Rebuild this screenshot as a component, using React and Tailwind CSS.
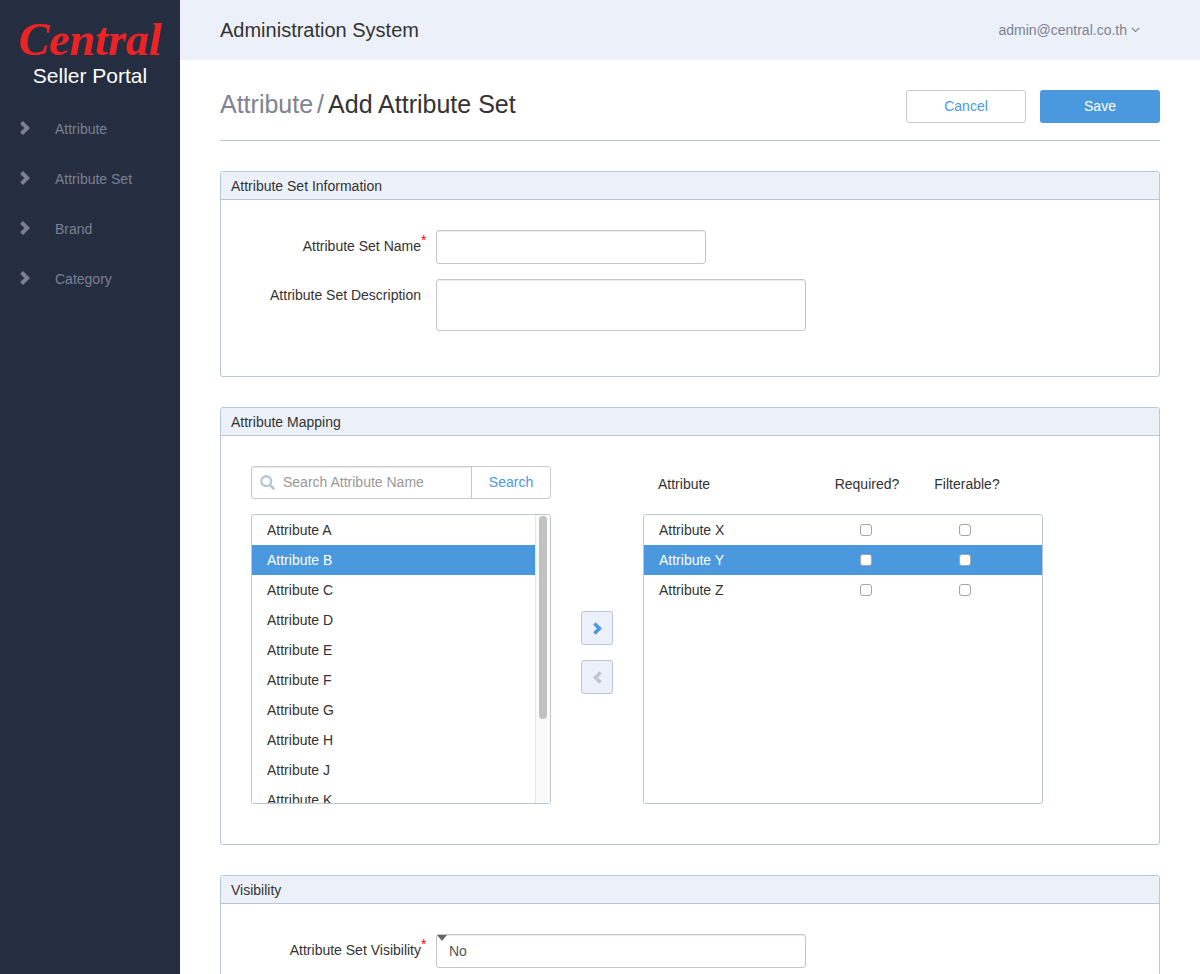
import { useState } from "react";

const NAV_ITEMS = ["Attribute", "Attribute Set", "Brand", "Category"];
const AVAILABLE = ["A", "B", "C", "D", "E", "F", "G", "H", "J", "K"];
const MAPPED = ["X", "Y", "Z"];
const VISIBLE_HEIGHT = 288;
const THUMB_HEIGHT = 203;

const FIELD =
  "block rounded-[3px] border border-[#c3c6c9] bg-white px-3 text-sm text-[#555] shadow-[inset_0_1px_1px_rgba(0,0,0,0.08)] outline-none focus:border-[#4a99df]";

function Chevron({ className }) {
  return (
    <svg viewBox="0 0 10 14" fill="currentColor" className={className} aria-hidden="true">
      <path d="M0.7 2.3 2.4 0.6a0.8 0.8 0 0 1 1.1 0L9.5 6.5a0.7 0.7 0 0 1 0 1L3.5 13.4a0.8 0.8 0 0 1-1.1 0L0.7 11.7a0.8 0.8 0 0 1 0-1.1L4.4 7 0.7 3.4a0.8 0.8 0 0 1 0-1.1Z" />
    </svg>
  );
}

function SearchIcon({ className }) {
  return (
    <svg viewBox="0 0 14 14" fill="none" stroke="currentColor" className={className} aria-hidden="true">
      <circle cx="5.8" cy="5.8" r="4.6" strokeWidth="2.2" />
      <path d="m9.4 9.4 3.2 3.2" strokeWidth="2.6" strokeLinecap="round" />
    </svg>
  );
}

function Panel({ title, bodyClass, children }) {
  return (
    <section className="mb-[30px] rounded-[3px] border border-[#b9c6d6] bg-white">
      <h2 className="rounded-t-[2px] border-b border-[#b9c6d6] bg-[#ecf0f9] px-2.5 pt-1 pb-[3px] text-sm leading-5">
        {title}
      </h2>
      <div className={bodyClass}>{children}</div>
    </section>
  );
}

function FormRow({ id, label, required, children }) {
  return (
    <div className="mb-[15px] flex items-start gap-[15px]">
      <label htmlFor={id} className="relative w-[170px] shrink-0 pt-1.5 text-right text-sm leading-5">
        {label}
        {required && (
          <span className="absolute top-0 left-full text-sm leading-5 text-[#f00]">*</span>
        )}
      </label>
      {children}
    </div>
  );
}

function AttributeList() {
  const [selected, setSelected] = useState("B");
  const [offset, setOffset] = useState(0);

  const handleScroll = (event) => {
    const { scrollTop, scrollHeight, clientHeight } = event.currentTarget;
    const range = scrollHeight - clientHeight;
    setOffset(range > 0 ? (scrollTop / range) * (VISIBLE_HEIGHT - THUMB_HEIGHT - 2) : 0);
  };

  return (
    <div className="flex h-[290px] overflow-hidden rounded-[3px] border border-[#b9c6d6]">
      <ul className="flex-1 overflow-y-auto [scrollbar-width:none]" onScroll={handleScroll}>
        {AVAILABLE.map((name) => (
          <li key={name}>
            <button
              type="button"
              onClick={() => setSelected(name)}
              className={
                selected === name
                  ? "block h-[30px] w-full bg-[#4a99df] px-[15px] text-left text-sm text-white"
                  : "block h-[30px] w-full px-[15px] text-left text-sm"
              }
            >
              Attribute {name}
            </button>
          </li>
        ))}
      </ul>
      <div className="w-[15px] border-l border-[#e7e7e7] bg-[#fafafa] pt-px pl-[3px]">
        <div
          className="h-[203px] w-2 rounded-full bg-[#c1c1c1]"
          style={{ transform: `translateY(${offset}px)` }}
        />
      </div>
    </div>
  );
}

function MappedTable() {
  const [selected, setSelected] = useState("Y");
  return (
    <table className="block w-[400px] text-sm">
      <thead className="block">
        <tr className="grid h-12 grid-cols-[174px_100px_100px] pt-2 leading-5">
          <th className="px-[15px] text-left font-normal">Attribute</th>
          <th className="text-center font-normal">Required?</th>
          <th className="text-center font-normal">Filterable?</th>
        </tr>
      </thead>
      <tbody className="block h-[290px] overflow-hidden rounded-[3px] border border-[#b9c6d6]">
        {MAPPED.map((name) => (
          <tr
            key={name}
            onClick={() => setSelected(name)}
            className={
              selected === name
                ? "grid h-[30px] grid-cols-[172px_99px_99px] items-center bg-[#4a99df] text-white"
                : "grid h-[30px] grid-cols-[172px_99px_99px] items-center"
            }
          >
            <td className="px-[15px]">Attribute {name}</td>
            {["Required", "Filterable"].map((flag) => (
              <td key={flag} className="flex justify-center">
                <input
                  type="checkbox"
                  aria-label={`Attribute ${name} ${flag}`}
                  className="size-3 appearance-none rounded-[3px] border border-[#a5a5a5] bg-white checked:bg-[#4a99df]"
                />
              </td>
            ))}
          </tr>
        ))}
      </tbody>
    </table>
  );
}

export default function App() {
  return (
    <div className="flex h-screen overflow-hidden bg-white font-['Liberation_Sans',Arial,sans-serif] text-[#333]">
      <aside className="w-[180px] shrink-0 bg-[#252e41]">
        <a href="#home" className="flex flex-col items-center pt-4 whitespace-nowrap">
          <span className="font-['Liberation_Serif',serif] text-[46px] leading-[48px] font-bold text-[#ed2224] italic">
            Central
          </span>
          <span className="text-[21px] leading-6 text-white">Seller Portal</span>
        </a>
        <nav className="mt-4">
          {NAV_ITEMS.map((item) => (
            <a
              key={item}
              href={`#${item.toLowerCase().replace(" ", "-")}`}
              className="flex h-[50px] items-center gap-[25px] pl-5 text-sm text-[#7a8092]"
            >
              <Chevron className="mb-0.5 h-3.5 w-2.5" />
              {item}
            </a>
          ))}
        </nav>
      </aside>

      <div className="flex min-w-0 flex-1 flex-col">
        <header className="flex h-[60px] shrink-0 items-center justify-between bg-[#ecf0f9] pr-[60px] pl-10">
          <div className="text-xl">Administration System</div>
          <button type="button" className="flex items-center gap-1 text-sm text-[#7e8292]">
            admin@central.co.th
            <svg viewBox="0 0 9 6" className="h-1.5 w-[9px]" fill="none" stroke="currentColor" strokeWidth="1.2" aria-hidden="true">
              <path d="m0.8 0.8 3.7 3.7 3.7-3.7" />
            </svg>
          </button>
        </header>

        <main className="flex-1 overflow-y-auto px-10 pt-[30px] [scrollbar-width:none]">
          <div className="mb-[30px] flex items-start justify-between border-b border-[#b9c6d6] pb-[17px]">
            <h1 className="text-[25px] leading-7">
              <a href="#attribute" className="text-[#7e8292]">Attribute</a>
              <span className="mx-1 text-[#7e8292]">/</span>
              Add Attribute Set
            </h1>
            <div className="flex gap-3.5">
              <button type="button" className="h-[33px] w-[120px] rounded-[3px] border border-[#c9c9c9] bg-white pb-0.5 text-sm text-[#4a99df]">
                Cancel
              </button>
              <button type="button" className="h-[33px] w-[120px] rounded-[3px] bg-[#4a99df] pb-0.5 text-sm text-white">
                Save
              </button>
            </div>
          </div>

          <Panel title="Attribute Set Information" bodyClass="p-[30px]">
            <FormRow id="set-name" label="Attribute Set Name" required>
              <input id="set-name" type="text" className={`${FIELD} h-[34px] w-[270px]`} />
            </FormRow>
            <FormRow id="set-description" label="Attribute Set Description">
              <textarea id="set-description" className={`${FIELD} h-[52px] w-[370px] resize-none py-1.5`} />
            </FormRow>
          </Panel>

          <Panel title="Attribute Mapping" bodyClass="flex gap-[30px] px-[30px] pt-[30px] pb-10">
            <div className="w-[300px]">
              <form className="mb-[15px] flex h-[33px] rounded-[3px] border border-[#c9c9c9]" onSubmit={(e) => e.preventDefault()}>
                <label htmlFor="attribute-search" className="flex flex-1 items-center gap-2 rounded-l-[2px] pb-px pl-2 text-[#b9c6d8] shadow-[inset_0_1px_1px_rgba(0,0,0,0.08)]">
                  <SearchIcon className="size-[15px] shrink-0" />
                  <input
                    id="attribute-search"
                    type="search"
                    aria-label="Search Attribute Name"
                    placeholder="Search Attribute Name"
                    className="w-full min-w-0 bg-transparent text-sm text-[#555] outline-none placeholder:text-[#999]"
                  />
                </label>
                <button type="submit" className="w-[79px] border-l border-[#c9c9c9] pb-0.5 text-sm text-[#4a99df]">
                  Search
                </button>
              </form>
              <AttributeList />
            </div>

            <div className="flex flex-col gap-[15px] pt-[145px]">
              <button type="button" aria-label="Add attribute" className="flex h-[34px] w-8 items-center justify-center rounded-[3px] border border-[#b9c6d6] bg-[#ecf0f9] text-[#4a99df]">
                <Chevron className="h-[13px] w-[9px]" />
              </button>
              <button type="button" aria-label="Remove attribute" className="flex h-[34px] w-8 items-center justify-center rounded-[3px] border border-[#b9c6d6] bg-[#ecf0f9] text-[#bcc6d6]">
                <Chevron className="h-[13px] w-[9px] rotate-180" />
              </button>
            </div>

            <MappedTable />
          </Panel>

          <Panel title="Visibility" bodyClass="p-[30px]">
            <FormRow id="set-visibility" label="Attribute Set Visibility" required>
              <div className="relative">
                <select id="set-visibility" className={`${FIELD} h-[34px] w-[370px] appearance-none`}>
                  <option>No</option>
                  <option>Yes</option>
                </select>
                <svg viewBox="0 0 10 6" className="pointer-events-none absolute top-px left-px h-1.5 w-2.5" fill="#666" aria-hidden="true">
                  <path d="M0 0h10L5 6Z" />
                </svg>
              </div>
            </FormRow>
          </Panel>
        </main>
      </div>
    </div>
  );
}
